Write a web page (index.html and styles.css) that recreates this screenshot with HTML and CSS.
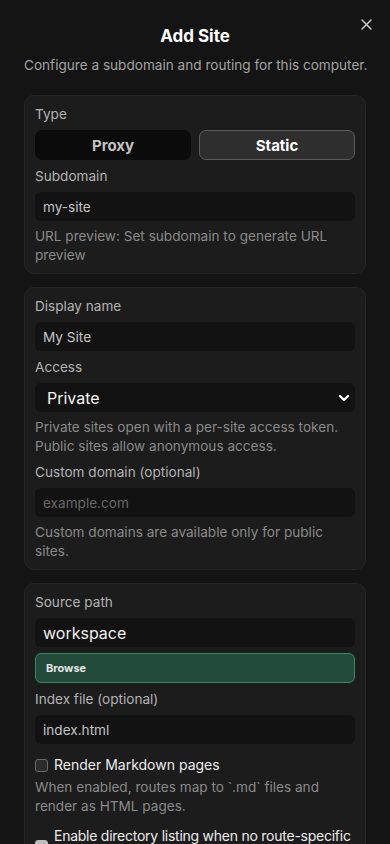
FILE: index.html
```html
<!DOCTYPE html>
<html>
<head>
    <meta charset="UTF-8">
    <meta name="viewport" content="width=device-width, initial-scale=1.0">
    <title>Add Site</title>
    <link rel="stylesheet" href="styles.css">
</head>
<body>
    <div class="dialog">
        <button class="close-button" aria-label="Close">
            <svg width="11" height="11" viewBox="0 0 11 11"><path d="M1 1L10 10M10 1L1 10" stroke="currentColor" stroke-width="1.5" stroke-linecap="round"/></svg>
        </button>
        <h2 class="dialog-title">Add Site</h2>
        <p class="dialog-subtitle">Configure a subdomain and routing for this computer.</p>

        <div class="section">
            <label class="field-label">Type</label>
            <div class="segmented">
                <button class="segment">Proxy</button>
                <button class="segment active">Static</button>
            </div>
            <label class="field-label">Subdomain</label>
            <input class="text-input" type="text" value="my-site">
            <p class="help-text">URL preview: Set subdomain to generate URL preview</p>
        </div>

        <div class="section">
            <label class="field-label">Display name</label>
            <input class="text-input" type="text" value="My Site">
            <label class="field-label">Access</label>
            <div class="select-wrap">
                <select class="select-input">
                    <option>Private</option>
                    <option>Public</option>
                </select>
                <svg class="select-chevron" width="12" height="8" viewBox="0 0 12 8"><path d="M2 2L6 6L10 2" fill="none" stroke="currentColor" stroke-width="2.4" stroke-linecap="round" stroke-linejoin="round"/></svg>
            </div>
            <p class="help-text">Private sites open with a per-site access token. Public sites allow anonymous access.</p>
            <label class="field-label">Custom domain (optional)</label>
            <input class="text-input" type="text" placeholder="example.com">
            <p class="help-text">Custom domains are available only for public sites.</p>
        </div>

        <div class="section">
            <label class="field-label">Source path</label>
            <input class="text-input large" type="text" value="workspace">
            <button class="browse-button">Browse</button>
            <label class="field-label">Index file (optional)</label>
            <input class="text-input" type="text" value="index.html">
            <div class="check-group">
                <label class="check-row">
                    <span class="checkbox"></span>
                    <span class="check-label">Render Markdown pages</span>
                </label>
                <p class="help-text">When enabled, routes map to `.md` files and render as HTML pages.</p>
            </div>
            <label class="check-row wrap">
                <span class="checkbox checked">
                    <svg width="9" height="9" viewBox="0 0 9 9"><path d="M1.5 4.8L3.6 6.8L7.5 2" fill="none" stroke="#2a2a2a" stroke-width="1.6"/></svg>
                </span>
                <span class="check-label tight">Enable directory listing when no <span class="nowrap">route-specific</span> index file is found</span>
            </label>
        </div>
    </div>
</body>
</html>
```

FILE: styles.css
```css
:root {
    --page-bg: #141414;
    --card-bg: #1c1c1c;
    --card-border: #262626;
    --input-bg: #121212;
    --label: #b3b3b3;
    --help: #8a8a8a;
    --text: #ececec;
}

* {
    margin: 0;
    padding: 0;
    box-sizing: border-box;
    font-family: Inter, "Noto Sans", sans-serif;
}

body {
    background-color: var(--page-bg);
    color: var(--text);
}

.dialog {
    position: relative;
    padding: 24px 24px 40px;
    display: flex;
    flex-direction: column;
}

.close-button {
    position: absolute;
    top: 18px;
    right: 18px;
    width: 12px;
    height: 12px;
    background: none;
    border: none;
    color: #c8c8c8;
    display: flex;
    align-items: center;
    justify-content: center;
}

.dialog-title {
    text-align: center;
    font-size: 17px;
    line-height: 24px;
    font-weight: 700;
    color: #ffffff;
}

.dialog-subtitle {
    text-align: center;
    font-size: 13.6px;
    line-height: 20px;
    color: #a3a3a3;
    margin-top: 7px;
    margin-bottom: 20px;
    white-space: nowrap;
}

.section {
    background-color: var(--card-bg);
    border: 1px solid var(--card-border);
    border-radius: 10px;
    padding: 8px 10px 8px;
    display: flex;
    flex-direction: column;
    gap: 6px;
    margin-bottom: 13px;
}

.field-label {
    font-size: 13.6px;
    line-height: 20px;
    color: var(--label);
}

.segmented {
    display: grid;
    grid-template-columns: 1fr 1fr;
    gap: 8px;
}

.segment {
    height: 30px;
    border-radius: 7px;
    border: 1px solid #0b0b0b;
    background-color: #0b0b0b;
    color: #c4c4c4;
    font-size: 15px;
    font-weight: 700;
}

.segment.active {
    background-color: #2e2e2e;
    border-color: #5c5c5c;
    color: #ffffff;
}

.text-input {
    height: 29px;
    border: none;
    border-radius: 6px;
    background-color: var(--input-bg);
    color: #c4c4c4;
    font-size: 13.6px;
    padding: 0 8px;
    outline: none;
}

.text-input::placeholder {
    color: #686868;
}

.text-input.large {
    font-size: 16px;
    color: #f0f0f0;
}

.select-wrap {
    position: relative;
}

.select-input {
    appearance: none;
    width: 100%;
    height: 29px;
    border: none;
    border-radius: 6px;
    background-color: var(--input-bg);
    color: #f4f4f4;
    font-size: 16px;
    padding: 0 12px;
    outline: none;
}

.select-chevron {
    position: absolute;
    right: 5px;
    top: 11px;
    color: #ffffff;
    pointer-events: none;
}

.help-text {
    font-size: 13.6px;
    line-height: 19px;
    color: var(--help);
}

.browse-button {
    height: 30px;
    border-radius: 6px;
    background-color: #224a3b;
    border: 1px solid #3b8464;
    color: #e6e6e6;
    font-size: 11px;
    font-weight: 700;
    text-align: left;
    padding: 0 10px;
}

.check-group {
    display: flex;
    flex-direction: column;
    gap: 3px;
    margin-top: 5px;
}

.check-row {
    display: flex;
    align-items: center;
    gap: 6px;
}

.check-row.wrap {
    margin-top: 4px;
}

.checkbox {
    flex-shrink: 0;
    width: 13px;
    height: 13px;
    border: 1px solid #6a6a6a;
    border-radius: 3px;
    background-color: #2c2c2c;
    display: flex;
    align-items: center;
    justify-content: center;
}

.checkbox.checked {
    background-color: #bdbdbd;
    border-color: #bdbdbd;
}

.check-label {
    font-size: 14px;
    line-height: 20px;
    color: var(--text);
}

.check-label.tight {
    letter-spacing: -0.25px;
}

.nowrap {
    white-space: nowrap;
}
```
